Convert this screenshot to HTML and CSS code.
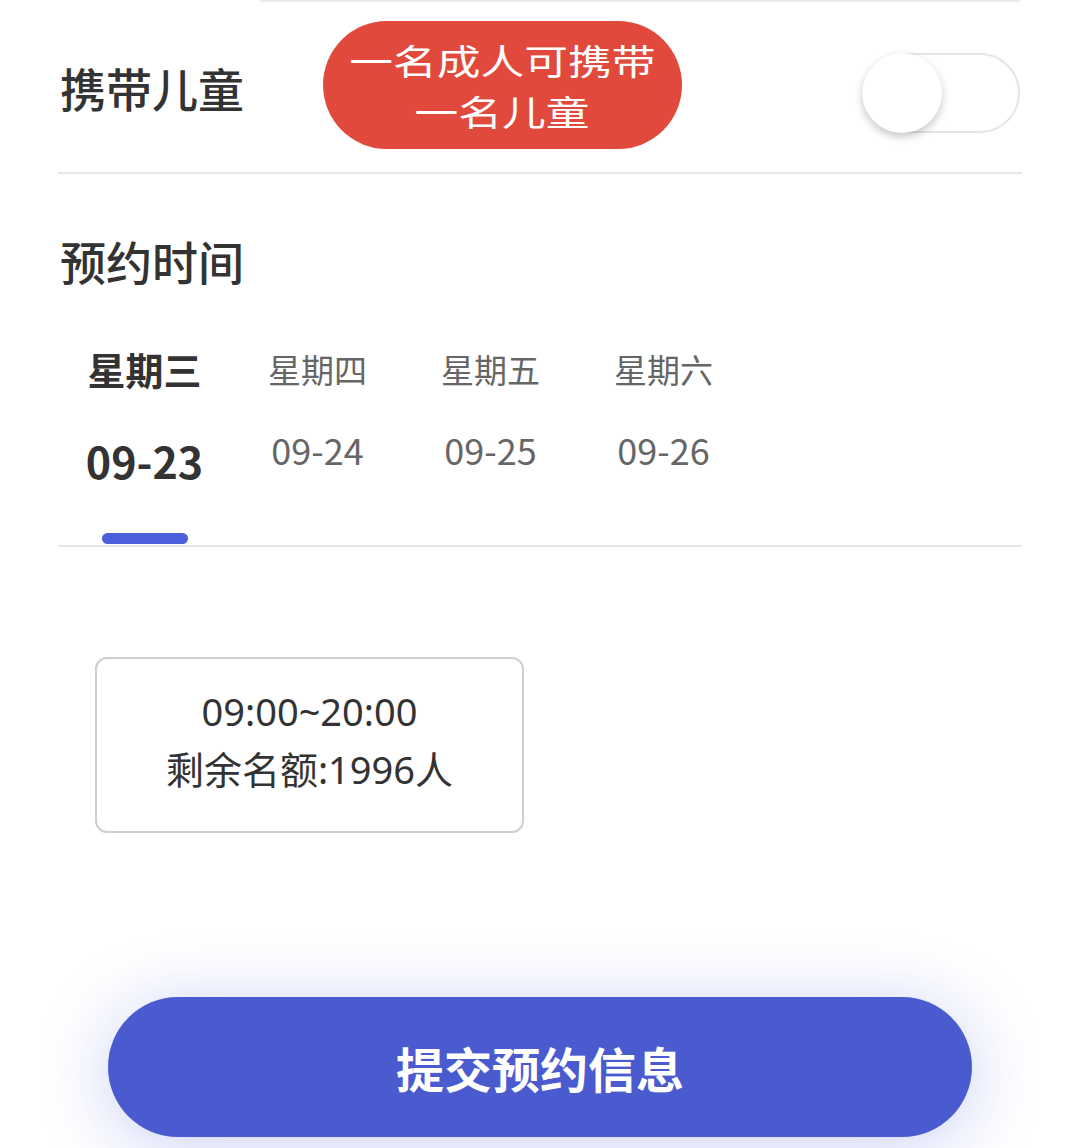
FILE: index.html
```html
<!DOCTYPE html>
<html lang="zh-CN">
<head>
    <meta charset="UTF-8">
    <meta name="viewport" content="width=device-width, initial-scale=1.0">
    <title>预约</title>
    <link rel="stylesheet" href="styles.css">
</head>
<body>
    <div class="page">
        <div class="top-line"></div>

        <!-- 携带儿童 -->
        <div class="row child-row">
            <span class="label">携带儿童</span>
            <div class="tip">
                <div class="tip-line">一名成人可携带</div>
                <div class="tip-line">一名儿童</div>
            </div>
            <div class="switch">
                <span class="knob"></span>
            </div>
        </div>

        <!-- 预约时间 -->
        <h2 class="title">预约时间</h2>

        <div class="tabs">
            <div class="tab active">
                <span class="week">星期三</span>
                <span class="date">09-23</span>
                <span class="bar"></span>
            </div>
            <div class="tab">
                <span class="week">星期四</span>
                <span class="date">09-24</span>
            </div>
            <div class="tab">
                <span class="week">星期五</span>
                <span class="date">09-25</span>
            </div>
            <div class="tab">
                <span class="week">星期六</span>
                <span class="date">09-26</span>
            </div>
        </div>

        <div class="slot">
            <span>09:00~20:00</span>
            <span>剩余名额:1996人</span>
        </div>

        <button class="submit">提交预约信息</button>
    </div>
</body>
</html>
```

FILE: styles.css
```css
body {
    margin: 0;
    background: #fff;
    color: #333;
    font-family: "Noto Sans CJK SC", "Noto Sans", sans-serif;
}

.page {
    padding: 0 58px;
    height: 1148px;
    box-sizing: border-box;
    overflow: hidden;
}

.top-line {
    height: 2px;
    margin-left: 202px;
    margin-right: 2px;
    background: #ececec;
}

.row {
    display: flex;
    align-items: center;
}

.child-row {
    height: 170px;
    border-bottom: 2px solid #e8e8e8;
    padding-left: 2px;
    padding-right: 2px;
}

.label {
    font-size: 46px;
    font-weight: 500;
    line-height: 60px;
}

.tip {
    margin-left: 79px;
    margin-top: -4px;
    width: 359px;
    height: 128px;
    border-radius: 64px;
    background: #e1493d;
    color: #fff;
    font-size: 35px;
    text-align: center;
    display: flex;
    flex-direction: column;
    align-items: center;
    justify-content: center;
}

/* the hint text is drawn wide in the design */
.tip-line {
    line-height: 51px;
    transform: scaleX(1.25);
}

.switch {
    margin-left: auto;
    width: 158px;
    height: 80px;
    box-sizing: border-box;
    border: 2px solid #e6e6e6;
    border-radius: 40px;
    background: #fff;
    display: flex;
    align-items: center;
    margin-top: 12px;
}

.knob {
    width: 80px;
    height: 80px;
    margin-left: -2px;
    border-radius: 50%;
    background: #fff;
    box-shadow: 0 4px 8px rgba(0, 0, 0, 0.22);
}

.title {
    margin: 56px 0 0 2px;
    font-size: 46px;
    font-weight: 500;
    line-height: 60px;
}

.tabs {
    display: flex;
    margin-top: 57px;
    border-bottom: 2px solid #e6e6e6;
}

.tab {
    width: 173px;
    display: flex;
    flex-direction: column;
    align-items: center;
    color: #666;
}

.week {
    font-size: 33px;
    line-height: 44px;
}

.date {
    margin-top: 34px;
    font-size: 36px;
    line-height: 48px;
}

.tab.active {
    color: #333;
}

.tab.active .week {
    font-size: 38px;
    font-weight: bold;
}

.tab.active .date {
    margin-top: 45px;
    font-size: 43px;
    font-weight: bold;
}

.bar {
    width: 86px;
    height: 11px;
    margin-top: 49px;
    margin-bottom: 1px;
    border-radius: 6px;
    background: #4c60dc;
}

.slot {
    margin: 110px 0 0 37px;
    width: 429px;
    height: 176px;
    box-sizing: border-box;
    padding-bottom: 10px;
    border: 2px solid #cfcfcf;
    border-radius: 12px;
    display: flex;
    flex-direction: column;
    align-items: center;
    justify-content: center;
    font-family: "Noto Sans", "Noto Sans CJK SC", sans-serif;
    font-size: 38px;
    line-height: 58px;
    color: #333;
}

.submit {
    display: block;
    margin: 164px 0 0 50px;
    width: 864px;
    height: 140px;
    border: none;
    border-radius: 70px;
    background: #4a5bcf;
    color: #fff;
    font-family: inherit;
    font-size: 48px;
    font-weight: bold;
    box-shadow: 0 8px 70px rgba(80, 100, 225, 0.3);
}
```
